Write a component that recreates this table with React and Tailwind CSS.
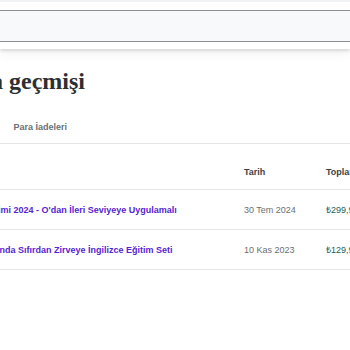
import { ShoppingCart } from 'lucide-react';

const purchases = [
  { id: 1, title: "Swift Eğitimi 2024 - O'dan İleri Seviyeye Uygulamalı", date: '30 Tem 2024', total: '₺299,99' },
  { id: 2, title: 'Ev Ortamında Sıfırdan Zirveye İngilizce Eğitim Seti', date: '10 Kas 2023', total: '₺129,99' },
];

const tabs = ['Kurslar', 'Abonelikler', 'Para İadeleri'];

const gridCls = "grid grid-cols-[353px_82px_140px]";

export default function App() {
  return (
    <div className="w-[350px] h-[350px] overflow-hidden bg-white font-['Liberation_Sans',Arial,sans-serif] text-[#2d2f31]">
      {/* Header */}
      <header className="h-[49px] bg-white shadow-[0_2px_3px_rgba(0,0,0,0.12),0_4px_12px_rgba(0,0,0,0.06)] relative z-10">
        <div className="h-[2px] bg-[#f2f3f5]" />
        <div className="mt-[8px] -mx-[20px] h-[32px] border border-[#8c9094] rounded-full bg-[#f7f9fa]" />
      </header>

      <div className="-ml-[109px] w-[620px]">
        <h1 className="mt-[18px] ml-[2px] text-[24px] leading-[28px] font-bold font-['Liberation_Serif','Times_New_Roman',serif] whitespace-nowrap">
          Satın alma geçmişi
        </h1>

        {/* Tabs */}
        <div className="mt-[25px] flex gap-[21px] border-b border-[#e4e6e8]">
          {tabs.map((tab, i) => (
            <button
              key={tab}
              className={`pb-[10px] text-[9px] leading-[12px] font-bold whitespace-nowrap ${i === 0 ? 'text-[#2d2f31] border-b-2 border-[#2d2f31] -mb-px' : 'text-[#6a6f73]'}`}
            >
              {tab}
            </button>
          ))}
        </div>

        {/* Table */}
        <div className="mt-[16px] text-[9px] leading-[12px]">
          <div className={`${gridCls} pt-[6px] pb-[11px] border-b border-[#e4e6e8] font-bold text-[#3e4143]`}>
            <div className="pl-[66px]">Kurs</div>
            <div>Tarih</div>
            <div>Toplam fiyat</div>
          </div>
          {purchases.map((p) => (
            <div key={p.id} className={`${gridCls} h-[40px] items-center border-b border-[#e4e6e8]`}>
              <div className="flex items-center gap-[12px] pl-[38px] whitespace-nowrap">
                <ShoppingCart className="w-[16px] h-[16px] text-[#2d2f31]" strokeWidth={1.5} />
                <span className="text-[#5624d0] font-bold">{p.title}</span>
              </div>
              <div className="text-[#6a6f73] whitespace-nowrap">{p.date}</div>
              <div className="text-[#1e6055] whitespace-nowrap">{p.total}</div>
            </div>
          ))}
        </div>
      </div>
    </div>
  );
}
